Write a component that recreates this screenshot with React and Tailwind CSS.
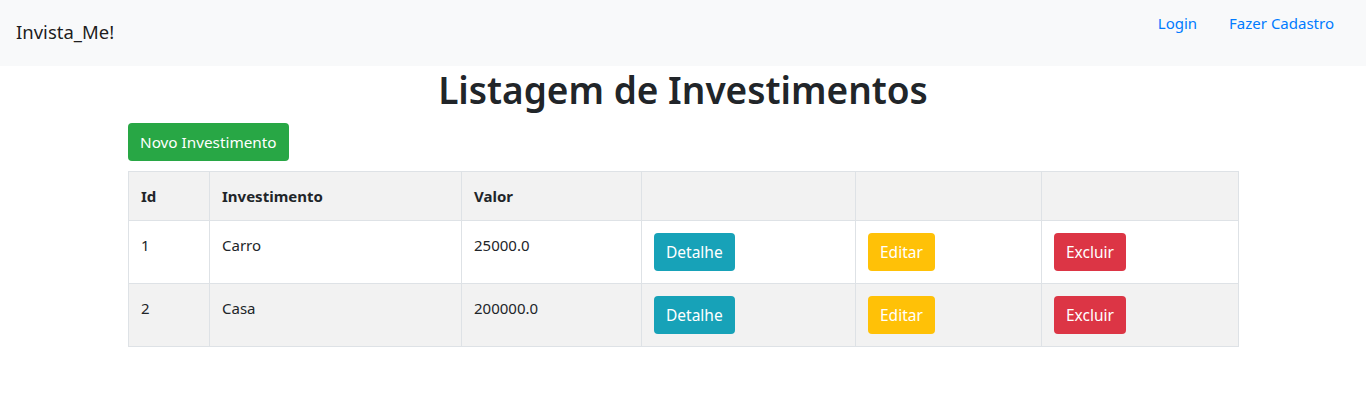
export default function App() {
  const rows = [
    { id: 1, nome: "Carro", valor: "25000.0" },
    { id: 2, nome: "Casa", valor: "200000.0" },
  ];
  const font = { fontFamily: '"Noto Sans", "Open Sans", sans-serif' };
  return (
    <div className="min-h-[409px] bg-white text-[#212529]" style={font}>
      <nav className="flex h-[66px] items-start justify-between bg-[#f8f9fa] px-4">
        <span className="mt-[17px] text-[18.5px] leading-[30px] text-[rgba(0,0,0,0.9)]">Invista_Me!</span>
        <div className="mt-[11px] flex">
          <a className="px-4 text-[15px] leading-6 text-[#007bff]">Login</a>
          <a className="px-4 text-[15px] leading-6 text-[#007bff]">Fazer Cadastro</a>
        </div>
      </nav>
      <div className="mx-auto w-[1110px]">
        <h1 className="mb-2 text-center text-[37px] font-semibold leading-[48px]">Listagem de Investimentos</h1>
        <button className="mt-px h-[38px] rounded bg-[#28a745] px-3 text-[15.3px] text-white">Novo Investimento</button>
        <table className="mt-[10px] w-full table-fixed border-collapse text-[15px] leading-6">
          <colgroup>
            <col className="w-[81px]" />
            <col className="w-[252px]" />
            <col className="w-[180px]" />
            <col className="w-[214px]" />
            <col className="w-[186px]" />
            <col className="w-[197px]" />
          </colgroup>
          <tbody>
            <tr className="bg-[#f2f2f2]">
              <th className="border border-[#dee2e6] p-3 text-left font-bold">Id</th>
              <th className="border border-[#dee2e6] p-3 text-left font-bold">Investimento</th>
              <th className="border border-[#dee2e6] p-3 text-left font-bold">Valor</th>
              <th className="border border-[#dee2e6] p-3"></th>
              <th className="border border-[#dee2e6] p-3"></th>
              <th className="border border-[#dee2e6] p-3"></th>
            </tr>
            {rows.map((r, i) => (
              <tr key={r.id} className={i % 2 === 1 ? "bg-[#f2f2f2]" : "bg-white"}>
                <td className="border border-[#dee2e6] p-3 align-top">{r.id}</td>
                <td className="border border-[#dee2e6] p-3 align-top">{r.nome}</td>
                <td className="border border-[#dee2e6] p-3 align-top">{r.valor}</td>
                <td className="border border-[#dee2e6] p-3 align-top">
                  <button className="h-[38px] rounded bg-[#17a2b8] px-3 text-[15.5px] text-white">Detalhe</button>
                </td>
                <td className="border border-[#dee2e6] p-3 align-top">
                  <button className="h-[38px] rounded bg-[#ffc107] px-3 text-[15.5px] text-white">Editar</button>
                </td>
                <td className="border border-[#dee2e6] p-3 align-top">
                  <button className="h-[38px] rounded bg-[#dc3545] px-3 text-[15.5px] text-white">Excluir</button>
                </td>
              </tr>
            ))}
          </tbody>
        </table>
      </div>
    </div>
  );
}
